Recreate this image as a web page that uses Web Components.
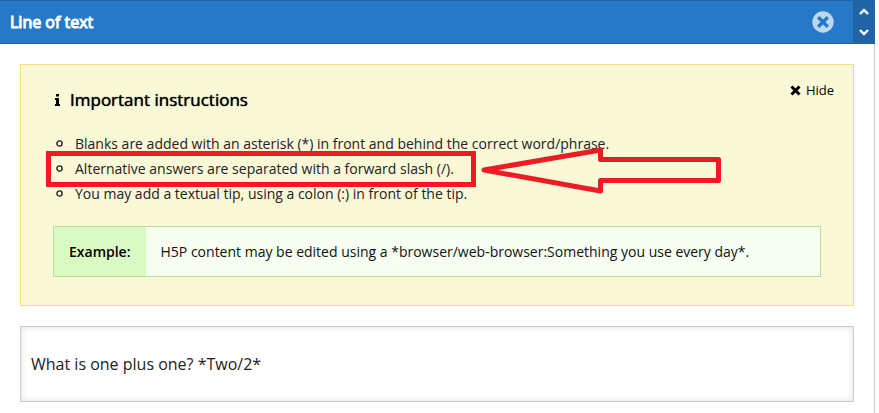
<!DOCTYPE html>
<html lang="en">

<head>
    <meta charset="UTF-8">
    <meta name="viewport" content="width=device-width, initial-scale=1.0">
    <title>Line of text</title>
    <style>
        body {
            margin: 0;
            background: #fcfcfc;
            font-family: "Open Sans", sans-serif;
            font-size: 14px;
            color: #222;
        }
    </style>
</head>

<body>
    <form-dialog heading="Line of text">
        <instruction-box heading="Important instructions">
            <instruction-list>
                <instruction-item>Blanks are added with an asterisk (*) in front and behind the correct word/phrase.</instruction-item>
                <instruction-item marked>Alternative answers are separated with a forward slash (/).</instruction-item>
                <instruction-item>You may add a textual tip, using a colon (:) in front of the tip.</instruction-item>
            </instruction-list>
            <example-box label="Example:">H5P content may be edited using a *browser/web-browser:Something you use every day*.</example-box>
        </instruction-box>
        <text-line value="What is one plus one? *Two/2*" label="Line of text"></text-line>
    </form-dialog>

    <script>
        // Shared base: clones the template into an open shadow root
        class BaseElement extends HTMLElement {
            constructor() {
                super();
                this.attachShadow({ mode: 'open' });
                const template = document.createElement('template');
                template.innerHTML = this.constructor.markup;
                this.shadowRoot.appendChild(template.content.cloneNode(true));
            }
        }

        class FormDialog extends BaseElement {
            static markup = `
                <style>
                    :host {
                        display: block;
                        box-sizing: border-box;
                        min-height: 100vh;
                        margin-right: 4px;
                        background: #fff;
                        border-right: 1px solid #ccc;
                    }
                    header {
                        display: flex;
                        align-items: stretch;
                        height: 44px;
                        margin-right: -1px;
                        background: #2579c6;
                    }
                    .bar {
                        flex: 1;
                        display: flex;
                        align-items: center;
                        justify-content: space-between;
                        padding: 0 19px 0 10px;
                        border: solid #2064a6;
                        border-width: 1px 0;
                    }
                    h1 {
                        margin: 0;
                        font-size: 16px;
                        font-weight: 400;
                        color: #fff;
                        -webkit-text-stroke: 1px #fff;
                    }
                    button {
                        display: block;
                        padding: 0;
                        border: 0;
                        background: none;
                        cursor: pointer;
                    }
                    svg { display: block; }
                    .order {
                        display: flex;
                        flex-direction: column;
                        justify-content: space-between;
                        width: 22px;
                        background: #2064a6;
                    }
                    .order button {
                        height: 22px;
                        padding: 0 5px;
                    }
                    main {
                        display: flex;
                        flex-direction: column;
                        gap: 20px;
                        padding: 20px;
                    }
                </style>
                <header>
                    <div class="bar">
                        <h1></h1>
                        <button type="button" aria-label="Close">
                            <svg width="22" height="22" viewBox="0 0 22 22">
                                <circle cx="11" cy="11" r="10.7" fill="#bed7ee"/>
                                <path d="M6.2 6.2l9.6 9.6M15.8 6.2l-9.600 9.600" stroke="#2579c6" stroke-width="3.4"/>
                            </svg>
                        </button>
                    </div>
                    <div class="order">
                        <button type="button" aria-label="Move up">
                            <svg width="12" height="22" viewBox="0 0 12 22"><path d="M2 14l4-4 4 4" fill="none" stroke="#fff" stroke-width="2.4"/></svg>
                        </button>
                        <button type="button" aria-label="Move down">
                            <svg width="12" height="22" viewBox="0 0 12 22"><path d="M2 8l4 4 4-4" fill="none" stroke="#fff" stroke-width="2.4"/></svg>
                        </button>
                    </div>
                </header>
                <main><slot></slot></main>
            `;

            connectedCallback() {
                this.shadowRoot.querySelector('h1').textContent = this.getAttribute('heading');
            }
        }

        class InstructionBox extends BaseElement {
            static markup = `
                <style>
                    :host {
                        display: block;
                        padding: 12px 32px 28px;
                        background: #f9f8d7;
                        border: 1px solid #fbde7c;
                    }
                    .top {
                        display: flex;
                        justify-content: space-between;
                        align-items: flex-start;
                        margin-right: -13px;
                    }
                    h2 {
                        display: flex;
                        align-items: center;
                        gap: 8px;
                        margin: 12px 0 20px;
                        font-size: 17px;
                        line-height: 22px;
                        font-weight: 400;
                        color: #000;
                        text-shadow: 0 0 1px #000;
                    }
                    button {
                        display: flex;
                        align-items: center;
                        gap: 5px;
                        margin-top: 4px;
                        padding: 0;
                        border: 0;
                        background: none;
                        font: inherit;
                        font-size: 13px;
                        line-height: 18px;
                        color: #000;
                        cursor: pointer;
                    }
                </style>
                <div class="top">
                    <h2>
                        <svg width="9" height="14" viewBox="0 0 9 14"><path d="M3 1h3v2.600H3zM2 5h4v6h1v2H2v-2h1V7H2z"/></svg>
                        <span></span>
                    </h2>
                    <button type="button">
                        <svg width="11" height="11" viewBox="0 0 11 11"><path d="M1.500 1.500l8 8M9.500 1.500l-8 8" stroke="#000" stroke-width="3"/></svg>
                        Hide
                    </button>
                </div>
                <slot></slot>
            `;

            connectedCallback() {
                this.shadowRoot.querySelector('h2 span').textContent = this.getAttribute('heading');
            }
        }

        class InstructionList extends BaseElement {
            static markup = `
                <style>
                    :host {
                        display: block;
                        margin-bottom: 20px;
                    }
                </style>
                <slot></slot>
            `;

            connectedCallback() {
                this.setAttribute('role', 'list');
            }
        }

        class InstructionItem extends BaseElement {
            static markup = `
                <style>
                    :host {
                        display: flex;
                        align-items: center;
                        gap: 12px;
                        position: relative;
                        padding-left: 3px;
                        line-height: 25px;
                    }
                    .mark { display: none; }
                    /* red frame and arrow drawn over the list */
                    :host([marked]) .mark {
                        display: block;
                        position: absolute;
                        left: -7px;
                        top: -10px;
                        pointer-events: none;
                    }
                </style>
                <svg width="7" height="7" viewBox="0 0 7 7"><circle cx="3.5" cy="3.5" r="2.600" fill="none" stroke="#222" stroke-width="1.4"/></svg>
                <span><slot></slot></span>
                <svg class="mark" width="676" height="50" viewBox="0 0 676 50" fill="none" stroke="#ed1c24" stroke-width="5">
                    <path d="M2.500 7.500h425v31h-425z"/>
                    <path stroke-linejoin="round" d="M438 24L554.500 4V13.500H672.500V34.500H554.500V45z"/>
                </svg>
            `;

            connectedCallback() {
                this.setAttribute('role', 'listitem');
            }
        }

        class ExampleBox extends BaseElement {
            static markup = `
                <style>
                    :host {
                        display: flex;
                        background: #f6fff2;
                        border: 1px solid #b9dd97;
                        line-height: 19px;
                        color: #111;
                    }
                    .label {
                        padding: 15px;
                        background: #d9fac3;
                        color: #000;
                        font-weight: 600;
                    }
                    .text { padding: 15px; }
                </style>
                <div class="label"></div>
                <div class="text"><slot></slot></div>
            `;

            connectedCallback() {
                this.shadowRoot.querySelector('.label').textContent = this.getAttribute('label');
            }
        }

        class TextLine extends BaseElement {
            static markup = `
                <style>
                    :host { display: block; }
                    input {
                        display: block;
                        box-sizing: border-box;
                        width: 100%;
                        padding: 26px 10px;
                        border: 1px solid #ccc;
                        box-shadow: inset 0 0 6px #ddd;
                        background: #fff;
                        font: inherit;
                        font-size: 16px;
                        line-height: 22px;
                        color: #222;
                    }
                </style>
                <input type="text">
            `;

            connectedCallback() {
                const input = this.shadowRoot.querySelector('input');
                input.value = this.getAttribute('value');
                input.setAttribute('aria-label', this.getAttribute('label'));
            }
        }

        customElements.define('form-dialog', FormDialog);
        customElements.define('instruction-box', InstructionBox);
        customElements.define('instruction-list', InstructionList);
        customElements.define('instruction-item', InstructionItem);
        customElements.define('example-box', ExampleBox);
        customElements.define('text-line', TextLine);
    </script>
</body>

</html>
